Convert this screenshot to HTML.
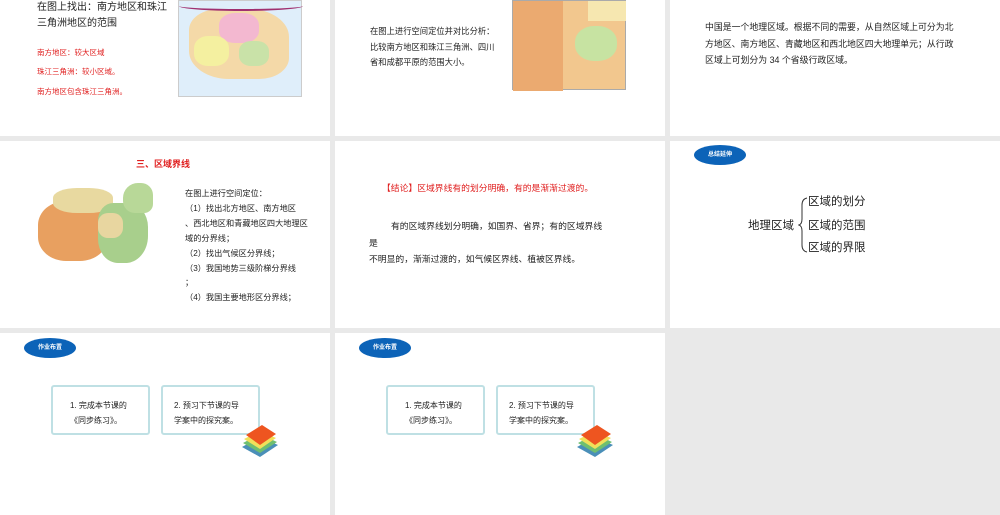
<!DOCTYPE html>
<html><head><meta charset="utf-8"><style>
*{margin:0;padding:0;box-sizing:border-box}
body{width:1000px;height:515px;background:#e9e9e9;position:relative;overflow:hidden;font-family:"Liberation Sans","Noto Sans CJK SC",sans-serif;color:#222}
.s{position:absolute;background:#fff;overflow:hidden}
.a{position:absolute;white-space:nowrap}
.r{color:#e02020}
.pill{position:absolute;width:52px;height:20px;border-radius:50%;background:#0c63b8;color:#fff;font-size:6px;font-weight:bold;text-align:center;line-height:20px}
.box{position:absolute;width:99px;height:50px;border:2px solid #bfe0e4;border-radius:3px;font-size:8px;line-height:15px;padding:11px 0 0 0}
</style></head><body>
<!-- row1 -->
<div class="s" style="left:0;top:0;width:330px;height:136px">
 <div class="a" style="left:37px;top:0;font-size:10px;line-height:16px">在图上找出：南方地区和珠江<br>三角洲地区的范围</div>
 <div class="a r" style="left:37px;top:47px;font-size:7.5px">南方地区：较大区域</div>
 <div class="a r" style="left:37px;top:66px;font-size:7.5px">珠江三角洲：较小区域。</div>
 <div class="a r" style="left:37px;top:86px;font-size:7.5px">南方地区包含珠江三角洲。</div>
 <div class="a" style="left:178px;top:0;width:124px;height:97px;background:#dfeefa;border:1px solid #ccc">
  <div class="a" style="left:10px;top:8px;width:100px;height:70px;background:#f4d9a8;border-radius:30% 40% 30% 40%"></div>
  <div class="a" style="left:40px;top:12px;width:40px;height:30px;background:#f3b8d0;border-radius:40%"></div>
  <div class="a" style="left:15px;top:35px;width:35px;height:30px;background:#f4f0a0;border-radius:40%"></div>
  <div class="a" style="left:60px;top:40px;width:30px;height:25px;background:#c9e2a8;border-radius:40%"></div>
  <div class="a" style="left:0;top:0;width:124px;height:10px;border-bottom:2px solid #a03070;border-radius:0 0 60% 60%"></div>
 </div>
</div>
<div class="s" style="left:335px;top:0;width:330px;height:136px">
 <div class="a" style="left:35px;top:24px;font-size:8.3px;line-height:15.5px">在图上进行空间定位并对比分析：<br>比较南方地区和珠江三角洲、四川<br>省和成都平原的范围大小。</div>
 <div class="a" style="left:177px;top:0;width:114px;height:90px;background:#f2c78e;border:1px solid #aaa">
  <div class="a" style="left:0;top:0;width:50px;height:90px;background:#ebaa70"></div>
  <div class="a" style="left:62px;top:25px;width:42px;height:35px;background:#c7e3a2;border-radius:45%"></div>
  <div class="a" style="left:75px;top:0;width:38px;height:20px;background:#f6e7b0"></div>
 </div>
</div>
<div class="s" style="left:670px;top:0;width:330px;height:136px">
 <div class="a" style="left:35px;top:19px;font-size:8.9px;line-height:16.5px">中国是一个地理区域。根据不同的需要，从自然区域上可分为北<br>方地区、南方地区、青藏地区和西北地区四大地理单元；从行政<br>区域上可划分为 34 个省级行政区域。</div>
</div>
<!-- row2 -->
<div class="s" style="left:0;top:141px;width:330px;height:187px">
 <div class="a r" style="left:136px;top:16px;font-size:9px;font-weight:bold">三、区域界线</div>
 <div class="a" style="left:38px;top:42px;width:127px;height:96px">
  <div class="a" style="left:0;top:18px;width:70px;height:60px;background:#e8a060;border-radius:40% 30% 40% 40%"></div>
  <div class="a" style="left:15px;top:5px;width:60px;height:25px;background:#e8d9a0;border-radius:40%"></div>
  <div class="a" style="left:60px;top:20px;width:50px;height:60px;background:#a8cf8c;border-radius:30% 40% 45% 40%"></div>
  <div class="a" style="left:85px;top:0;width:30px;height:30px;background:#b8d898;border-radius:50% 40% 30% 40%"></div>
  <div class="a" style="left:60px;top:30px;width:25px;height:25px;background:#e8d6a0;border-radius:40%"></div>
 </div>
 <div class="a" style="left:185px;top:46px;font-size:8.2px;line-height:14.9px">在图上进行空间定位：<br>（1）找出北方地区、南方地区<br>、西北地区和青藏地区四大地理区<br>域的分界线；<br>（2）找出气候区分界线；<br>（3）我国地势三级阶梯分界线<br>；<br>（4）我国主要地形区分界线；</div>
</div>
<div class="s" style="left:335px;top:141px;width:330px;height:187px">
 <div class="a r" style="left:47px;top:40px;font-size:8.8px">【结论】区域界线有的划分明确，有的是渐渐过渡的。</div>
 <div class="a" style="left:34px;top:77px;font-size:8.8px;line-height:16.5px">&nbsp;&nbsp;&nbsp;&nbsp;&nbsp;&nbsp;&nbsp;&nbsp;&nbsp;有的区域界线划分明确，如国界、省界；有的区域界线<br>是<br>不明显的，渐渐过渡的，如气候区界线、植被区界线。</div>
</div>
<div class="s" style="left:670px;top:141px;width:330px;height:187px">
 <div class="pill" style="left:24px;top:4px">总结延伸</div>
 <div class="a" style="left:78px;top:76px;font-size:11.5px">地理区域</div>
 <svg class="a" style="left:128px;top:56px" width="12" height="56"><path d="M9 1 Q4 2 4 8 L4 22 Q4 27 1 28 Q4 29 4 34 L4 48 Q4 54 9 55" fill="none" stroke="#333" stroke-width="1"/></svg>
 <div class="a" style="left:138px;top:52px;font-size:11.5px">区域的划分</div>
 <div class="a" style="left:138px;top:76px;font-size:11.5px">区域的范围</div>
 <div class="a" style="left:138px;top:98px;font-size:11.5px">区域的界限</div>
</div>
<!-- row3 -->
<div class="s" style="left:0;top:333px;width:330px;height:182px">
 <div class="pill" style="left:24px;top:5px">作业布置</div>
 <div class="box" style="left:51px;top:52px;padding-left:17px">1. 完成本节课的<br>《同步练习》。</div>
 <div class="box" style="left:161px;top:52px;padding-left:11px">2. 预习下节课的导<br>学案中的探究案。</div>
 <svg class="a" style="left:240px;top:90px" width="40" height="36"><polygon points="2,24 20,34 38,22 20,14" fill="#4a8fb8"/><polygon points="3,20 20,30 37,19 20,11" fill="#6fbf70"/><polygon points="4,16 20,26 36,15 20,8" fill="#f1e05a"/><polygon points="6,12 20,22 36,11 22,2" fill="#ee5520"/></svg>
</div>
<div class="s" style="left:335px;top:333px;width:330px;height:182px">
 <div class="pill" style="left:24px;top:5px">作业布置</div>
 <div class="box" style="left:51px;top:52px;padding-left:17px">1. 完成本节课的<br>《同步练习》。</div>
 <div class="box" style="left:161px;top:52px;padding-left:11px">2. 预习下节课的导<br>学案中的探究案。</div>
 <svg class="a" style="left:240px;top:90px" width="40" height="36"><polygon points="2,24 20,34 38,22 20,14" fill="#4a8fb8"/><polygon points="3,20 20,30 37,19 20,11" fill="#6fbf70"/><polygon points="4,16 20,26 36,15 20,8" fill="#f1e05a"/><polygon points="6,12 20,22 36,11 22,2" fill="#ee5520"/></svg>
</div>
</body></html>
